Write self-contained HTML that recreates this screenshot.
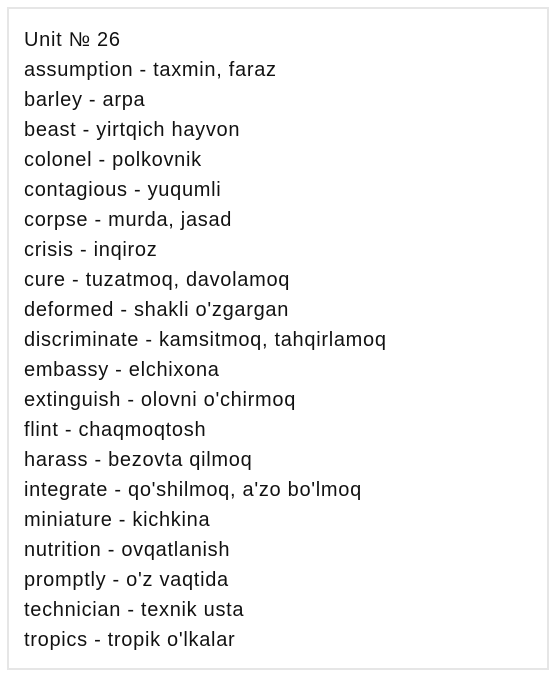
<!DOCTYPE html>
<html><head><meta charset="utf-8"><style>
html,body{margin:0;padding:0;background:#fff;}
.box{position:absolute;left:7px;top:7px;width:538px;height:659px;border:2px solid #e6e6e6;}
.t{position:absolute;left:15px;top:16px;font-family:"Liberation Sans",sans-serif;font-size:20px;letter-spacing:0.7px;line-height:30px;color:#111;white-space:nowrap;}
</style></head><body>
<div class="box"><div class="t">Unit № 26<br>assumption - taxmin, faraz<br>barley - arpa<br>beast - yirtqich hayvon<br>colonel - polkovnik<br>contagious - yuqumli<br>corpse - murda, jasad<br>crisis - inqiroz<br>cure - tuzatmoq, davolamoq<br>deformed - shakli o'zgargan<br>discriminate - kamsitmoq, tahqirlamoq<br>embassy - elchixona<br>extinguish - olovni o'chirmoq<br>flint - chaqmoqtosh<br>harass - bezovta qilmoq<br>integrate - qo'shilmoq, a'zo bo'lmoq<br>miniature - kichkina<br>nutrition - ovqatlanish<br>promptly - o'z vaqtida<br>technician - texnik usta<br>tropics - tropik o'lkalar</div></div>
</body></html>
